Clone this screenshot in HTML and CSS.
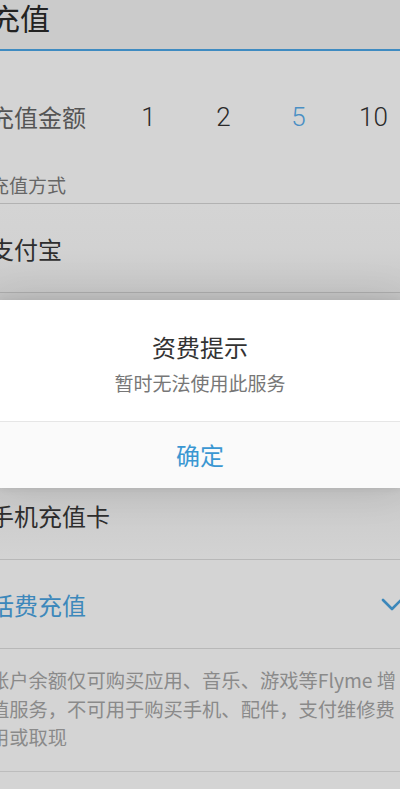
FILE: index.html
```html
<!DOCTYPE html>
<html lang="zh-CN">
<head>
<meta charset="utf-8">
<title>充值</title>
<link rel="stylesheet" href="styles.css">
</head>
<body>
<div class="page">
  <header class="appbar"><h1 class="title">充值</h1></header>
  <section class="amount">
    <span class="amount-label">充值金额</span>
    <span class="num">1</span>
    <span class="num">2</span>
    <span class="num num-active">5</span>
    <span class="num">10</span>
  </section>
  <div class="section-label">充值方式</div>
  <ul class="methods">
    <li class="method method-top">支付宝</li>
    <li class="method method-hidden"></li>
    <li class="method method-hidden"></li>
    <li class="method method-below">手机充值卡</li>
    <li class="method method-active"><span>话费充值</span>
      <svg class="chev" width="22" height="14" viewBox="0 0 22 14"><path d="M2 2 L11 11 L20 2" fill="none" stroke="#3b87ba" stroke-width="2.6" stroke-linecap="round" stroke-linejoin="round"/></svg>
    </li>
  </ul>
  <p class="desc">账户余额仅可购买应用、音乐、游戏等Flyme 增值服务，不可用于购买手机、配件，支付维修费用或取现</p>
  <div class="method method-tail"></div>
</div>
<div class="dialog">
  <div class="dialog-body">
    <div class="dialog-title">资费提示</div>
    <div class="dialog-msg">暂时无法使用此服务</div>
  </div>
  <div class="dialog-btn">确定</div>
</div>
</body>
</html>
```
FILE: styles.css
```css
html, body {
  margin: 0;
  padding: 0;
  overflow: hidden;
  height: 789px;
  background: #d4d4d4;
}
body {
  font-family: "Noto Sans CJK SC", "Noto Sans", sans-serif;
  position: relative;
}
.page {
  margin-left: -10px;
  width: 420px;
}
.appbar {
  height: 49px;
  background: #cbcbcb;
  border-bottom: 2px solid #3f8bc1;
}
.title {
  margin: 0;
  font-size: 30px;
  font-weight: 400;
  line-height: 34px;
  color: #222;
}
.amount {
  display: grid;
  grid-template-columns: 121px repeat(4, 75px);
  align-items: center;
  height: 70px;
  margin-top: 31px;
}
.amount-label {
  font-size: 24px;
  color: #555;
  line-height: 32px;
}
.num {
  font-family: Roboto, "Noto Sans", sans-serif;
  font-weight: 300;
  font-size: 26px;
  color: #2a2a2a;
  text-align: center;
}
.num-active { color: #4a8fc4; }
.section-label {
  margin-top: 20px;
  font-size: 19px;
  line-height: 26px;
  color: #666;
  padding-bottom: 5px;
  border-bottom: 1px solid #b2b2b2;
}
.methods {
  list-style: none;
  margin: 0;
  padding: 0;
}
.method {
  height: 88px;
  border-bottom: 1px solid #b8b8b8;
  display: flex;
  align-items: center;
  justify-content: space-between;
  font-size: 24px;
  color: #2e2e2e;
  padding-right: 7px;
}
.method-top {
  background: linear-gradient(#d4d4d4 0%, #d2d2d2 50%, #c8c8c8 100%);
  border-bottom-color: #acacac;
}
.method-hidden { background: #c4c4c4; }
.method-below {
  background: linear-gradient(#c4c4c4 0%, #cdcdcd 50%, #d3d3d3 100%);
}
.method-active {
  color: #3d88bb;
}
.chev { display: block; margin-top: 2px; }
.desc {
  margin: 0;
  padding: 17px 0 19px;
  width: 412px;
  font-size: 19.3px;
  line-height: 28.5px;
  color: #8a8a8a;
  border-bottom: 1px solid #bdbdbd;
}
.method-tail { border-bottom: none; }
.dialog {
  position: absolute;
  top: 300px;
  left: 0;
  width: 400px;
  background: #fff;
  box-shadow: 0 0 40px rgba(0,0,0,0.10), 0 0 8px rgba(0,0,0,0.08);
}
.dialog-body {
  padding: 31px 0 25px;
  text-align: center;
  border-bottom: 1px solid #e6e6e6;
}
.dialog-title {
  font-size: 24px;
  line-height: 32px;
  color: #333;
}
.dialog-msg {
  margin-top: 7px;
  font-size: 19px;
  line-height: 26px;
  color: #777;
}
.dialog-btn {
  height: 66px;
  line-height: 66px;
  text-align: center;
  font-size: 24px;
  color: #3a97d2;
  background: #fafafa;
}
```
